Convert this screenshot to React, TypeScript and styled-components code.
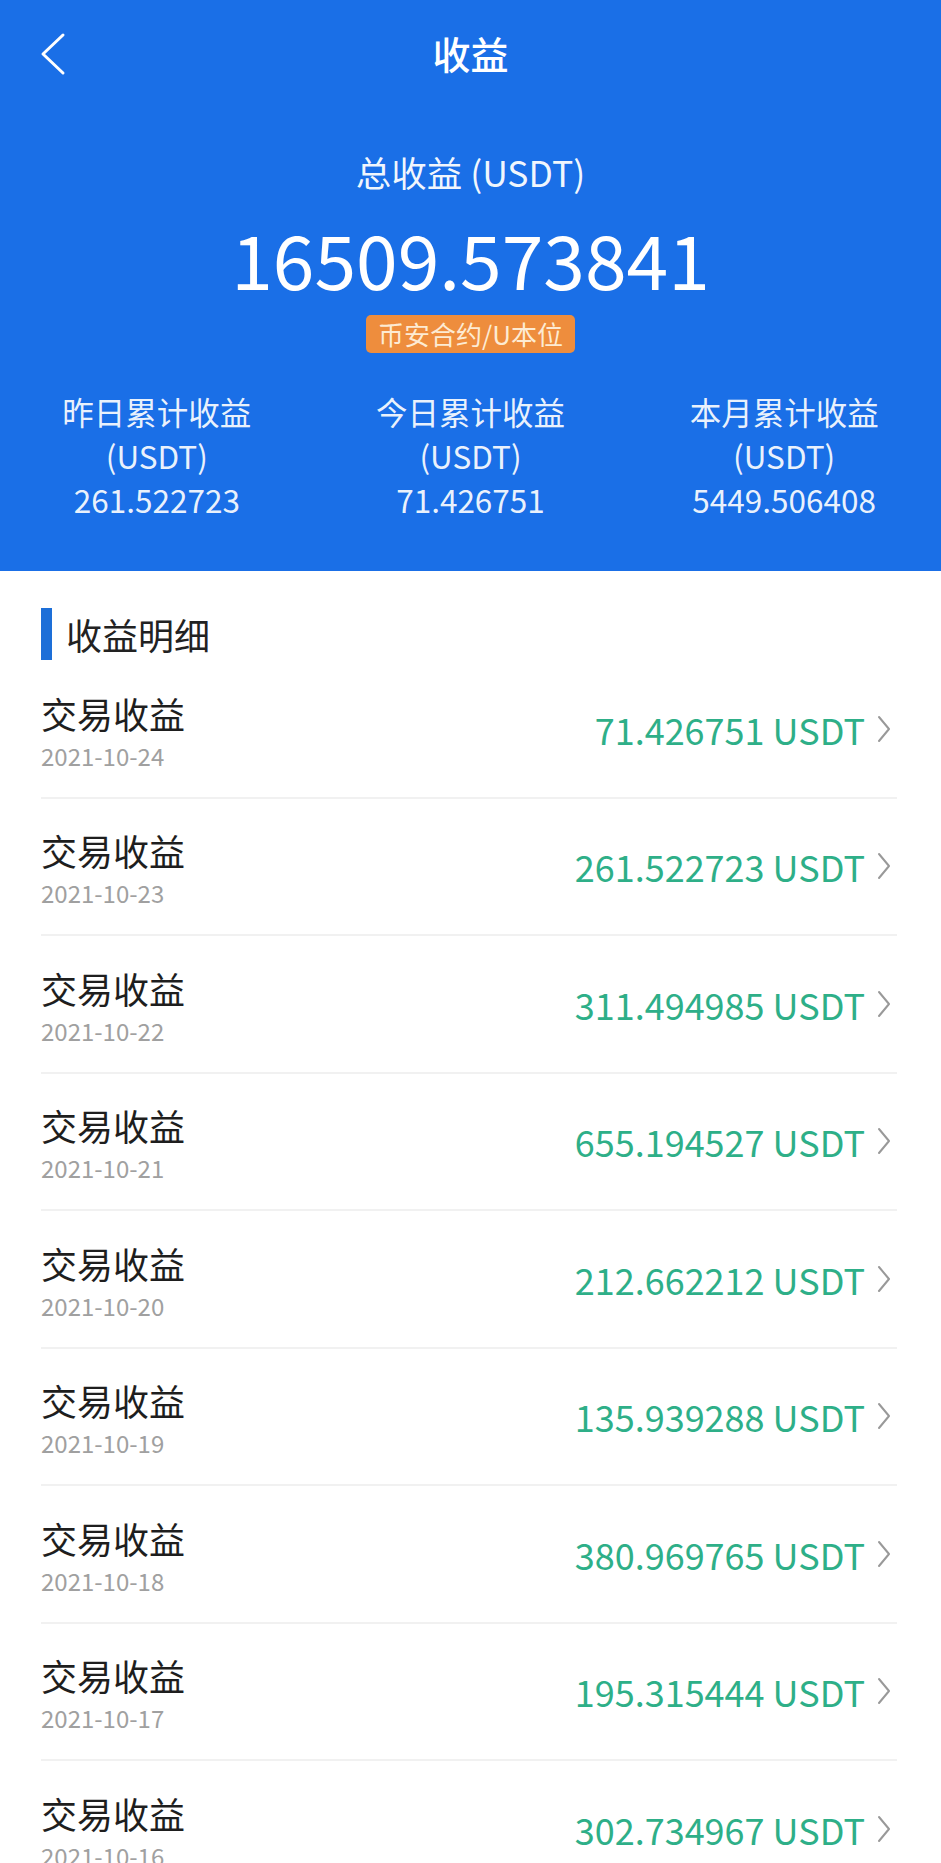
import styled, { createGlobalStyle } from "styled-components";

const GlobalStyle = createGlobalStyle`
  html, body {
    margin: 0;
    padding: 0;
    background: #ffffff;
  }
  body {
    font-family: "Noto Sans CJK SC", "Noto Sans", sans-serif;
  }
`;

const Page = styled.div`
  width: 941px;
  min-height: 1863px;
  background: #ffffff;
  overflow: hidden;
`;

const Header = styled.header`
  background: #1a6fe7;
  color: #ffffff;
  padding-bottom: 50px;
  display: flex;
  flex-direction: column;
  align-items: center;
`;

const NavBar = styled.div`
  position: relative;
  width: 100%;
  height: 106px;
  display: flex;
  align-items: center;
  justify-content: center;
`;

const BackButton = styled.button`
  position: absolute;
  left: 38px;
  top: 31px;
  width: 30px;
  height: 46px;
  padding: 0;
  border: none;
  background: transparent;
  display: flex;
  align-items: center;
  justify-content: center;
`;

const NavTitle = styled.h1`
  margin: 0;
  font-size: 38px;
  font-weight: 500;
  line-height: 46px;
`;

const TotalLabel = styled.div`
  margin-top: 45px;
  font-size: 35.5px;
  line-height: 42px;
  color: rgba(255, 255, 255, 0.94);
`;

const TotalValue = styled.div`
  margin-top: 28px;
  font-size: 75px;
  line-height: 74px;
`;

const Badge = styled.span`
  margin-top: 20px;
  height: 38px;
  padding: 0 12px;
  box-sizing: border-box;
  display: inline-flex;
  align-items: center;
  background: #ee8d3d;
  border-radius: 5px;
  color: #fdebd3;
  font-size: 26px;
  line-height: 1;
`;

const Stats = styled.div`
  margin-top: 36px;
  width: 100%;
  display: grid;
  grid-template-columns: repeat(3, 1fr);
`;

const StatCell = styled.div`
  display: flex;
  flex-direction: column;
  align-items: center;
  font-size: 31.5px;
  line-height: 44px;
  color: rgba(255, 255, 255, 0.92);
`;

const SectionHead = styled.div`
  margin: 37px 0 0 41px;
  height: 52px;
  display: flex;
  align-items: center;
  gap: 14px;
`;

const SectionBar = styled.span`
  width: 11px;
  height: 52px;
  background: #1d6fd8;
`;

const SectionTitle = styled.h2`
  margin: 0;
  font-size: 36px;
  font-weight: 400;
  line-height: 44px;
  color: #222222;
`;

const List = styled.ul`
  list-style: none;
  margin: 1px 44px 0 41px;
  padding: 0;
`;

const Row = styled.li`
  height: 137.5px;
  box-sizing: border-box;
  border-bottom: 2px solid #f1f1f1;
  display: flex;
  align-items: center;
  justify-content: space-between;
`;

const RowLeft = styled.div`
  padding-top: 10px;
  display: flex;
  flex-direction: column;
`;

const RowTitle = styled.div`
  font-size: 36px;
  line-height: 44px;
  color: #1e1e1e;
`;

const RowDate = styled.div`
  font-size: 24px;
  line-height: 42px;
  color: #a0a0a0;
`;

const RowRight = styled.div`
  display: flex;
  align-items: center;
  gap: 12px;
  margin-right: 6px;
`;

const Amount = styled.span`
  font-size: 36px;
  line-height: 44px;
  color: #2eaf88;
`;

const BackIcon = () => (
  <svg width="30" height="46" viewBox="0 0 30 46" fill="none">
    <path
      d="M25 4 L5 23 L25 42"
      stroke="#ffffff"
      strokeWidth="3"
      strokeLinecap="round"
      strokeLinejoin="round"
    />
  </svg>
);

const ChevronRight = () => (
  <svg width="14" height="30" viewBox="0 0 14 30" fill="none">
    <path
      d="M2 3 L12 15 L2 27"
      stroke="#999999"
      strokeWidth="2"
      strokeLinecap="round"
      strokeLinejoin="round"
    />
  </svg>
);

const stats = [
  { label: "昨日累计收益", value: "261.522723" },
  { label: "今日累计收益", value: "71.426751" },
  { label: "本月累计收益", value: "5449.506408" },
];

const records = [
  { date: "2021-10-24", amount: "71.426751" },
  { date: "2021-10-23", amount: "261.522723" },
  { date: "2021-10-22", amount: "311.494985" },
  { date: "2021-10-21", amount: "655.194527" },
  { date: "2021-10-20", amount: "212.662212" },
  { date: "2021-10-19", amount: "135.939288" },
  { date: "2021-10-18", amount: "380.969765" },
  { date: "2021-10-17", amount: "195.315444" },
  { date: "2021-10-16", amount: "302.734967" },
];

const App = () => {
  return (
    <Page>
      <GlobalStyle />
      <Header>
        <NavBar>
          <BackButton aria-label="返回">
            <BackIcon />
          </BackButton>
          <NavTitle>收益</NavTitle>
        </NavBar>
        <TotalLabel>总收益 (USDT)</TotalLabel>
        <TotalValue>16509.573841</TotalValue>
        <Badge>币安合约/U本位</Badge>
        <Stats>
          {stats.map((s) => (
            <StatCell key={s.label}>
              <span>{s.label}</span>
              <span>(USDT)</span>
              <span>{s.value}</span>
            </StatCell>
          ))}
        </Stats>
      </Header>

      <SectionHead>
        <SectionBar />
        <SectionTitle>收益明细</SectionTitle>
      </SectionHead>

      <List>
        {records.map((r) => (
          <Row key={r.date}>
            <RowLeft>
              <RowTitle>交易收益</RowTitle>
              <RowDate>{r.date}</RowDate>
            </RowLeft>
            <RowRight>
              <Amount>{r.amount} USDT</Amount>
              <ChevronRight />
            </RowRight>
          </Row>
        ))}
      </List>
    </Page>
  );
};

export default App;
